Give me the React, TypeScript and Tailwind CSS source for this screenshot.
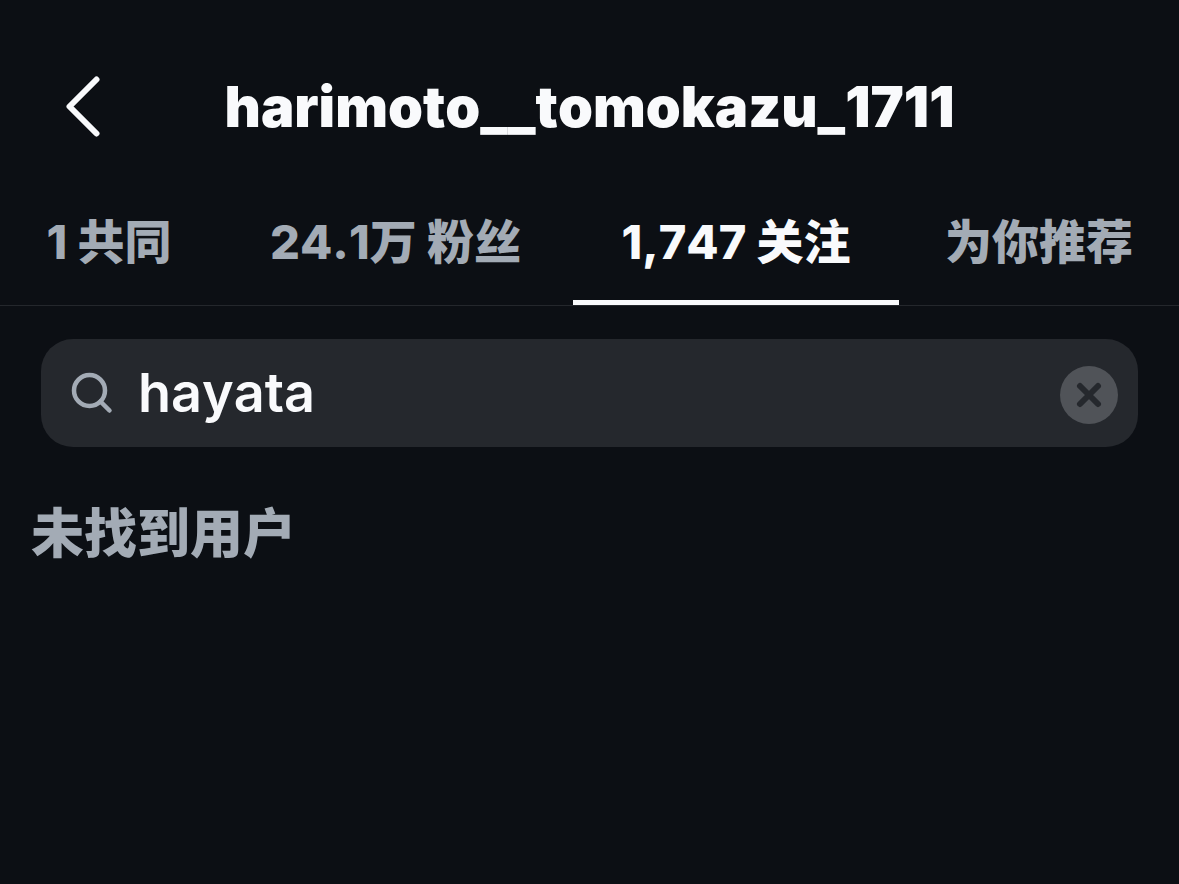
import React from "react";

const tabs = [
  { key: "mutual", label: "1 共同", width: "w-[218px]" },
  { key: "followers", label: "24.1万 粉丝", width: "w-[355px]" },
  { key: "following", label: "1,747 关注", width: "w-[326px]" },
  { key: "suggested", label: "为你推荐", width: "flex-1" },
];

const BackIcon = () => (
  <svg width="36" height="64" viewBox="0 0 36 64" fill="none" stroke="currentColor" strokeWidth="6" strokeLinecap="round" strokeLinejoin="round" aria-hidden="true">
    <path d="M32.5 4.500 5.500 31.500l27 27" />
  </svg>
);

const SearchIcon = () => (
  <svg width="42" height="42" viewBox="0 0 42 42" fill="none" stroke="currentColor" strokeWidth="4.500" strokeLinecap="round" aria-hidden="true">
    <circle cx="18.500" cy="18.500" r="15.500" />
    <path d="m29.500 29.500 9 9" />
  </svg>
);

const ClearIcon = () => (
  <svg width="58" height="58" viewBox="0 0 58 58" aria-hidden="true">
    <circle cx="29" cy="29" r="29" fill="#505358" />
    <path d="m20 20 18 18M38 20 20 38" stroke="#25282d" strokeWidth="6" strokeLinecap="round" />
  </svg>
);

const App = () => {
  const [active, setActive] = React.useState("following");
  const [query, setQuery] = React.useState("hayata");

  return (
    <div className="min-h-screen bg-[#0c0f14] text-[#f9fafc] font-['Inter','Noto_Sans_CJK_SC',sans-serif] [font-kerning:none]">
      <header className="grid grid-cols-[1fr_auto_1fr] items-center pt-[65px] px-16">
        <button type="button" aria-label="返回" className="h-[84px] w-10 flex items-center">
          <BackIcon />
        </button>
        <h1 className="text-[56px] leading-[84px] font-black whitespace-nowrap">harimoto__tomokazu_1711</h1>
      </header>

      <nav className="mt-[27px] h-[130px] flex border-b border-[#24272c]">
        {tabs.map((tab) => (
          <button
            key={tab.key}
            type="button"
            onClick={() => setActive(tab.key)}
            className={`${tab.width} pt-2 text-[47px] leading-[70px] font-extrabold whitespace-nowrap border-b-[5px] ${
              active === tab.key ? "border-[#f9fafc]" : "border-transparent text-[#a3abb5]"
            }`}
          >
            {tab.label}
          </button>
        ))}
      </nav>

      <main className="px-[31px]">
        <label className="mt-[33px] mx-[10px] h-[108px] pl-[30px] pr-5 flex items-center gap-[25px] rounded-[32px] bg-[#25282d] text-[#a3abb5]">
          <SearchIcon />
          <input
            type="text"
            aria-label="搜索"
            value={query}
            onChange={(e) => setQuery(e.target.value)}
            className="flex-1 min-w-0 text-[54px] leading-[84px] font-semibold text-[#f9fafc] outline-none"
          />
          <button type="button" aria-label="清除" className="pt-1" onClick={() => setQuery("")}>
            <ClearIcon />
          </button>
        </label>
        <p className="mt-12 text-[53px] leading-[78px] font-extrabold text-[#a3abb5]">未找到用户</p>
      </main>
    </div>
  );
};

export default App;
